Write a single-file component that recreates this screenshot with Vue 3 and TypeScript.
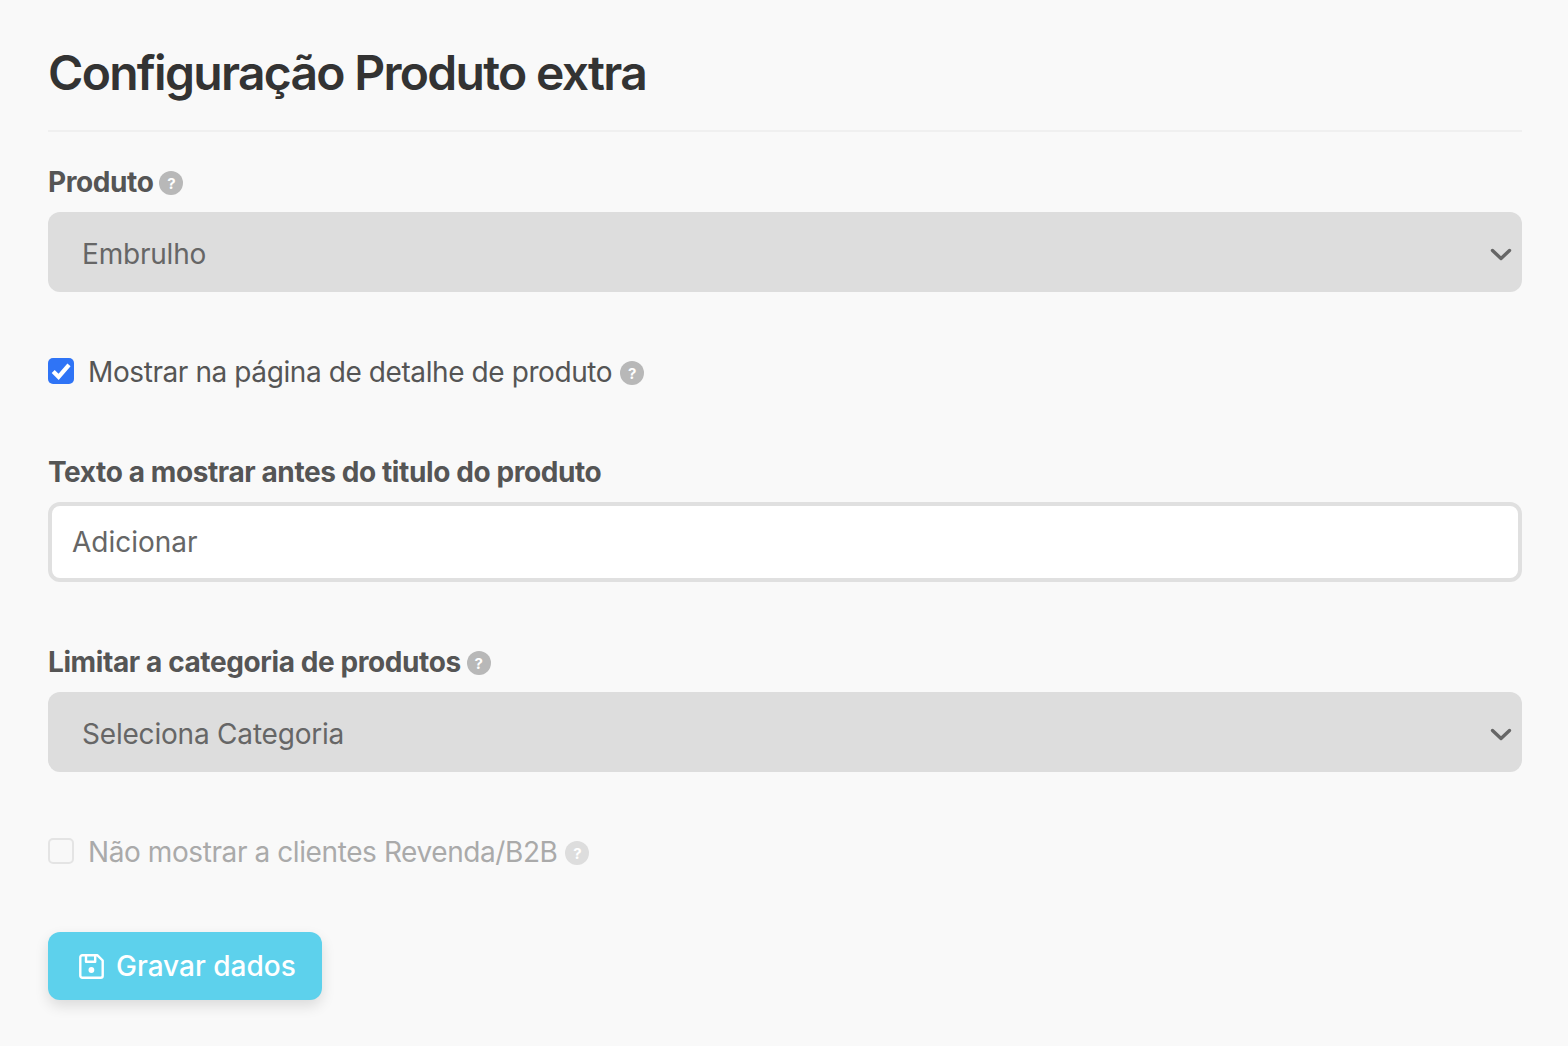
<script setup lang="ts">
const heading = 'Configuração Produto extra'
</script>

<template>
  <main class="page">
    <h1 class="title">{{ heading }}</h1>
    <div class="rule"></div>

    <div class="field first">
      <div class="label"><span>Produto</span><span class="help">?</span></div>
      <select class="select" disabled><option>Embrulho</option></select>
      <svg class="chev" viewBox="0 0 24 14" width="24" height="14"><path d="M3.5 2.5 12 10.5l8.5-8" fill="none" stroke="#666" stroke-width="3.4" stroke-linecap="round" stroke-linejoin="round"/></svg>
    </div>

    <label class="check check-a">
      <input type="checkbox" class="box on" checked />
      <span>Mostrar na página de detalhe de produto</span>
      <span class="help">?</span>
    </label>

    <div class="field text-field">
      <div class="label"><span>Texto a mostrar antes do titulo do produto</span></div>
      <input class="input" type="text" value="Adicionar" />
    </div>

    <div class="field cat-field">
      <div class="label"><span>Limitar a categoria de produtos</span><span class="help">?</span></div>
      <select class="select" disabled><option>Seleciona Categoria</option></select>
      <svg class="chev" viewBox="0 0 24 14" width="24" height="14"><path d="M3.5 2.5 12 10.5l8.5-8" fill="none" stroke="#666" stroke-width="3.4" stroke-linecap="round" stroke-linejoin="round"/></svg>
    </div>

    <label class="check check-b muted">
      <input type="checkbox" class="box" disabled />
      <span>Não mostrar a clientes Revenda/B2B</span>
      <span class="help">?</span>
    </label>

    <button class="save" type="button">
      <svg viewBox="0 0 25 25" width="25" height="25" fill="none" stroke="#fff" stroke-width="2.4" stroke-linejoin="round" stroke-linecap="round">
        <path d="M1.3 3.3a2 2 0 0 1 2-2h15.2l5.2 5.2v15.2a2 2 0 0 1-2 2H3.3a2 2 0 0 1-2-2Z"/>
        <path d="M7 1.3v6.4h9.2V1.3"/>
        <circle cx="12.4" cy="16" r="2.9" fill="#fff" stroke="none"/>
      </svg>
      <span>Gravar dados</span>
    </button>
  </main>
</template>

<style>
html, body { margin: 0; background: #f9f9f9; }
</style>

<style scoped>
.page {
  box-sizing: border-box;
  width: 1568px;
  height: 1046px;
  padding: 40px 46px 0 48px;
  background: #f9f9f9;
  font-family: Inter, "Noto Sans", sans-serif;
  color: #555;
  overflow: hidden;
}
.title {
  margin: 0;
  height: 66px;
  font-size: 48px;
  line-height: 66px;
  font-weight: 600;
  letter-spacing: -1.7px;
  color: #333;
}
.rule { height: 2px; margin-top: 24px; background: #f0f0f0; }
.field { position: relative; }
.first { margin-top: 34px; }
.text-field { margin-top: 64px; }
.cat-field { margin-top: 64px; }
.label {
  display: flex;
  align-items: center;
  gap: 6px;
  height: 32px;
  margin-bottom: 14px;
  font-size: 28px;
  line-height: 32px;
  font-weight: 700;
  letter-spacing: -0.4px;
  color: #555;
}
.select {
  display: block;
  box-sizing: border-box;
  width: 100%;
  height: 80px;
  padding: 4px 0 0 34px;
  border: 0;
  border-radius: 12px;
  background: #ddd;
  color: #666;
  opacity: 1;
  appearance: none;
  font: 400 28px Inter, "Noto Sans", sans-serif;
  letter-spacing: -0.2px;
}
.chev { position: absolute; right: 9px; top: 82px; }
.input {
  display: block;
  box-sizing: border-box;
  width: 100%;
  height: 80px;
  padding: 0 20px;
  border: 4px solid #e0e0e0;
  border-radius: 12px;
  background: #fff;
  color: #666;
  outline: 0;
  font: 400 28px Inter, "Noto Sans", sans-serif;
}
.check {
  display: flex;
  align-items: center;
  height: 40px;
  font-size: 28px;
  line-height: 40px;
  letter-spacing: -0.41px;
  color: #555;
}
.check-a { margin-top: 60px; }
.check-b { margin-top: 60px; }
.check > span:first-of-type { margin-right: 8px; }
.box {
  box-sizing: border-box;
  width: 26px;
  height: 26px;
  margin: -2px 14px 0 0;
  appearance: none;
  border: 2px solid #e4e4e4;
  border-radius: 5px;
  background: #f8f8f8;
}
.box.on {
  border: 0;
  background: #2f74f6 url("data:image/svg+xml,%3Csvg xmlns='http://www.w3.org/2000/svg' viewBox='0 0 26 26'%3E%3Cpath d='M5.2 13.4l5.4 5.4L21 6.8' fill='none' stroke='%23fff' stroke-width='4.2'/%3E%3C/svg%3E") center / 26px 26px no-repeat;
}
.help {
  display: inline-flex;
  align-items: center;
  justify-content: center;
  width: 24px;
  height: 24px;
  margin-top: 2px;
  border-radius: 50%;
  background: #b8b8b8;
  color: #fff;
  font-size: 15px;
  font-weight: 700;
  letter-spacing: 0;
  line-height: 1;
}
.muted { color: #aaa; }
.muted .help { background: #ddd; }
.save {
  display: flex;
  align-items: center;
  gap: 12px;
  box-sizing: border-box;
  width: 274px;
  height: 68px;
  margin-top: 60px;
  padding: 0 0 0 31px;
  border: 0;
  border-radius: 12px;
  background: #5dd1ec;
  box-shadow: 0 6px 14px rgba(0, 0, 0, 0.12);
  color: #fff;
  font: 500 28px Inter, "Noto Sans", sans-serif;
}
.save svg { flex: none; }
</style>
